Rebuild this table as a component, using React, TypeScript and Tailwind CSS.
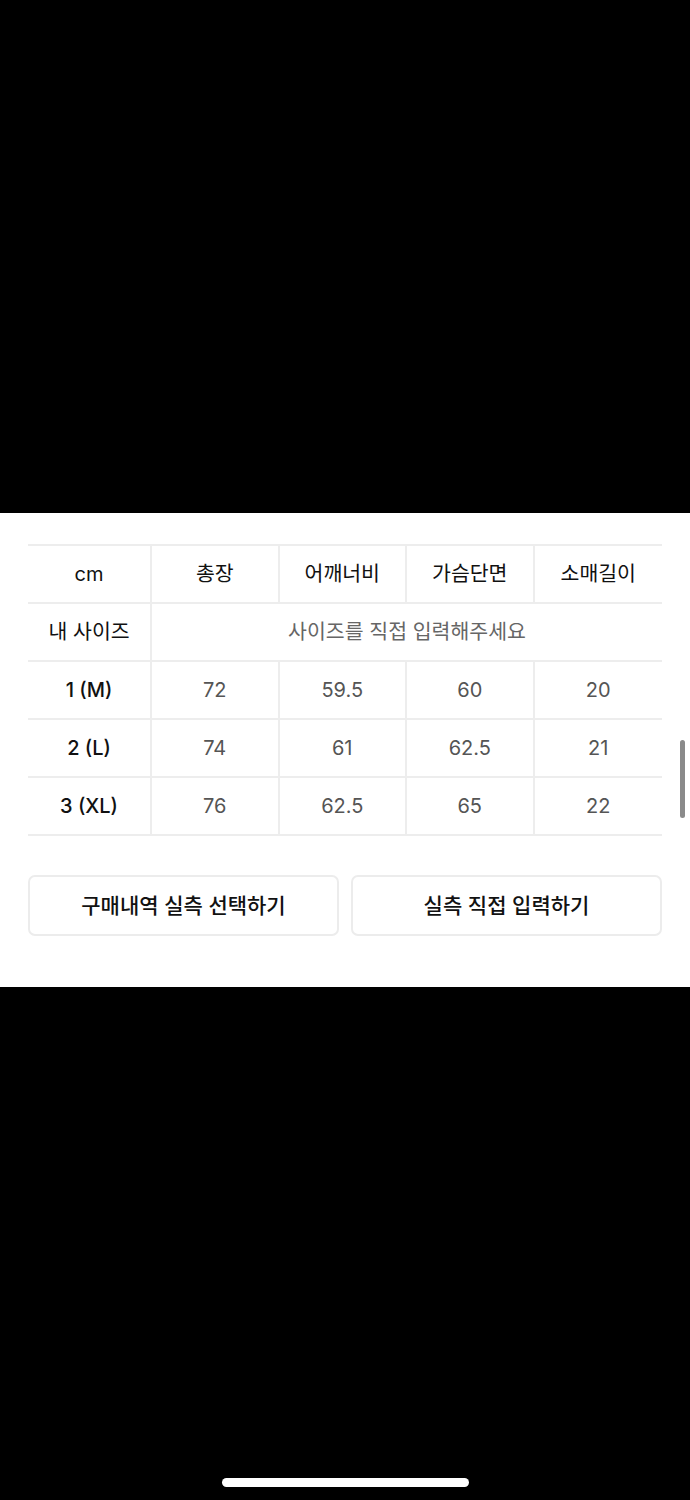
const headers = ["총장", "어깨너비", "가슴단면", "소매길이"];

const rows = [
  { label: "1 (M)", values: ["72", "59.5", "60", "20"] },
  { label: "2 (L)", values: ["74", "61", "62.5", "21"] },
  { label: "3 (XL)", values: ["76", "62.5", "65", "22"] },
];

const font = { fontFamily: 'Inter, "Noto Sans CJK KR", sans-serif' };

function Cell({ children, className = "", last = false }: { children: React.ReactNode; className?: string; last?: boolean }) {
  return (
    <div
      className={`h-[58px] flex items-center justify-center border-b-2 border-[#ededed] ${
        last ? "" : "border-r-2"
      } ${className}`}
    >
      {children}
    </div>
  );
}

export default function App() {
  return (
    <div className="w-[690px] h-[1500px] bg-black flex flex-col" style={font}>
      <div className="h-[513px] shrink-0" />

      <div className="h-[474px] shrink-0 bg-white relative pt-[31px] px-[28px]">
        <div className="grid grid-cols-[124px_repeat(4,1fr)] border-t-2 border-[#ededed]">
          <Cell className="text-[20px] text-[#111]">cm</Cell>
          {headers.map((h, i) => (
            <Cell key={h} last={i === headers.length - 1} className="text-[20.5px] text-[#111]">
              {h}
            </Cell>
          ))}

          <Cell className="text-[20.5px] text-[#111]">내 사이즈</Cell>
          <div className="col-span-4 h-[58px] flex items-center justify-center border-b-2 border-[#ededed] text-[20.5px] text-[#666]">
            사이즈를 직접 입력해주세요
          </div>

          {rows.map((r) => (
            <div key={r.label} className="contents">
              <Cell className="text-[20px] font-medium text-[#111]">{r.label}</Cell>
              {r.values.map((v, i) => (
                <Cell key={i} last={i === r.values.length - 1} className="text-[20px] text-[#555]">
                  {v}
                </Cell>
              ))}
            </div>
          ))}
        </div>

        <div className="mt-[39px] grid grid-cols-2 gap-[12px]">
          <button className="h-[61px] rounded-[7px] border-2 border-[#ececec] bg-white text-[21px] font-medium text-[#111]">
            구매내역 실측 선택하기
          </button>
          <button className="h-[61px] rounded-[7px] border-2 border-[#ececec] bg-white text-[21px] font-medium text-[#111]">
            실측 직접 입력하기
          </button>
        </div>

        <div className="absolute right-[5px] top-[227px] w-[5px] h-[78px] rounded-full bg-[#8a8a8a]" />
      </div>

      <div className="flex-1 flex flex-col justify-end items-center pb-[13px]">
        <div className="w-[247px] h-[9px] rounded-full bg-white" />
      </div>
    </div>
  );
}
